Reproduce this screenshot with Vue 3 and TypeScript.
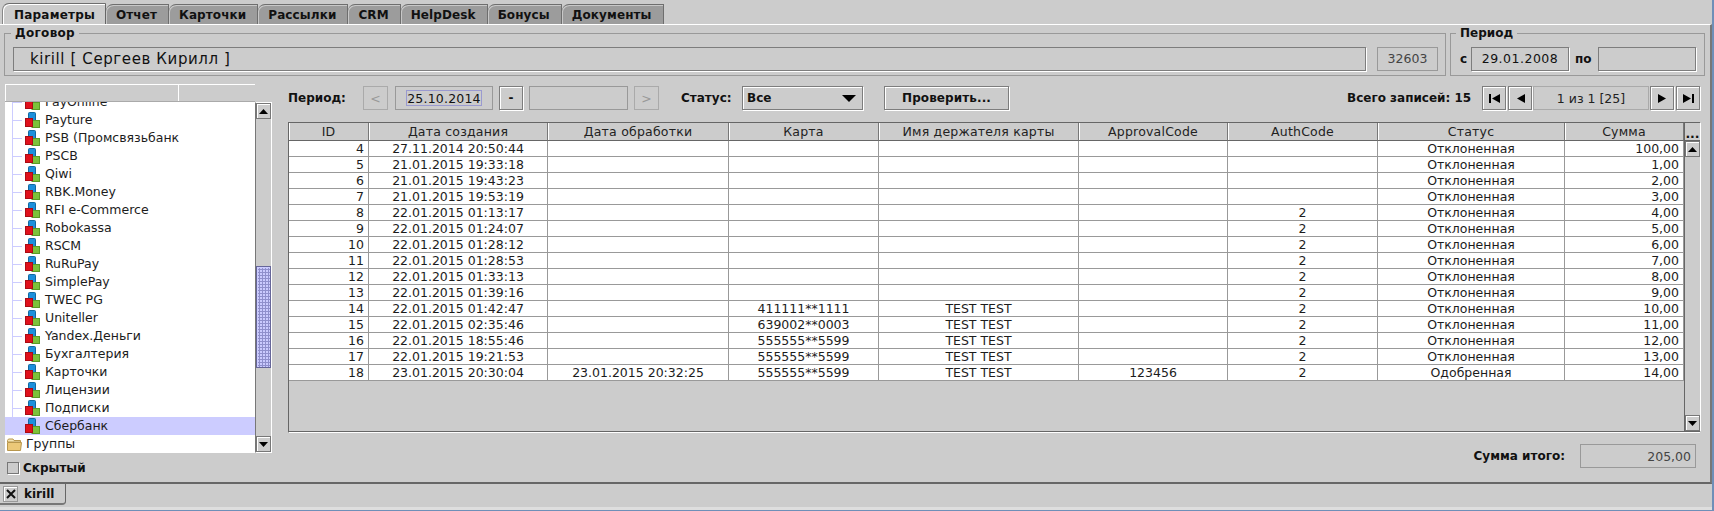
<script setup lang="ts">
interface Row {
  id: number; created: string; done: string; card: string; holder: string;
  approval: string; auth: string; status: string; sum: string;
}
const tabs = ['Параметры', 'Отчет', 'Карточки', 'Рассылки', 'CRM', 'HelpDesk', 'Бонусы', 'Документы'];
const tree = ['PayOnline', 'Payture', 'PSB (Промсвязьбанк', 'PSCB', 'Qiwi', 'RBK.Money', 'RFI e-Commerce', 'Robokassa', 'RSCM', 'RuRuPay', 'SimplePay', 'TWEC PG', 'Uniteller', 'Yandex.Деньги', 'Бухгалтерия', 'Карточки', 'Лицензии', 'Подписки', 'Сбербанк'];
const headers = ['ID', 'Дата создания', 'Дата обработки', 'Карта', 'Имя держателя карты', 'ApprovalCode', 'AuthCode', 'Статус', 'Сумма'];
const raw: [number, string, string, string, string, string, string, string, string][] = [
  [4, '27.11.2014 20:50:44', '', '', '', '', '', 'Отклоненная', '100,00'],
  [5, '21.01.2015 19:33:18', '', '', '', '', '', 'Отклоненная', '1,00'],
  [6, '21.01.2015 19:43:23', '', '', '', '', '', 'Отклоненная', '2,00'],
  [7, '21.01.2015 19:53:19', '', '', '', '', '', 'Отклоненная', '3,00'],
  [8, '22.01.2015 01:13:17', '', '', '', '', '2', 'Отклоненная', '4,00'],
  [9, '22.01.2015 01:24:07', '', '', '', '', '2', 'Отклоненная', '5,00'],
  [10, '22.01.2015 01:28:12', '', '', '', '', '2', 'Отклоненная', '6,00'],
  [11, '22.01.2015 01:28:53', '', '', '', '', '2', 'Отклоненная', '7,00'],
  [12, '22.01.2015 01:33:13', '', '', '', '', '2', 'Отклоненная', '8,00'],
  [13, '22.01.2015 01:39:16', '', '', '', '', '2', 'Отклоненная', '9,00'],
  [14, '22.01.2015 01:42:47', '', '411111**1111', 'TEST TEST', '', '2', 'Отклоненная', '10,00'],
  [15, '22.01.2015 02:35:46', '', '639002**0003', 'TEST TEST', '', '2', 'Отклоненная', '11,00'],
  [16, '22.01.2015 18:55:46', '', '555555**5599', 'TEST TEST', '', '2', 'Отклоненная', '12,00'],
  [17, '22.01.2015 19:21:53', '', '555555**5599', 'TEST TEST', '', '2', 'Отклоненная', '13,00'],
  [18, '23.01.2015 20:30:04', '23.01.2015 20:32:25', '555555**5599', 'TEST TEST', '123456', '2', 'Одобренная', '14,00'],
];
const rows: Row[] = raw.map(([id, created, done, card, holder, approval, auth, status, sum]) => ({ id, created, done, card, holder, approval, auth, status, sum }));
const colWidths = [80, 179, 181, 150, 200, 149, 150, 187, 119];
</script>

<template>
  <div class="app">
    <div class="tabs">
      <div v-for="(t, i) in tabs" :key="t" class="tab" :class="{ active: i === 0 }">{{ t }}</div>
    </div>

    <div class="panel">
      <div class="top-row">
        <fieldset class="group contract">
          <legend>Договор</legend>
          <div class="field name-field">kirill [ Сергеев Кирилл ]</div>
          <div class="field disabled num-field">32603</div>
        </fieldset>
        <fieldset class="group period">
          <legend>Период</legend>
          <span class="bold c-label">с</span>
          <div class="field date-field">29.01.2008</div>
          <span class="bold po-label">по</span>
          <div class="field date-field empty"></div>
        </fieldset>
      </div>

      <div class="content">
        <aside class="side">
          <div class="list-box">
            <div class="list-col">
              <div class="list-head"><div class="lh one"></div><div class="lh two"></div></div>
              <div class="list-body">
                <div v-for="(n, i) in tree" :key="n" class="tree-row" :class="{ selected: i === tree.length - 1 }">
                  <svg class="cube" width="15" height="16" viewBox="0 0 15 16">
                    <rect x="3.5" y="0.5" width="7" height="9" rx="1" fill="#1c8fdc" stroke="#13689f" />
                    <rect x="7" y="8.5" width="7.5" height="7" fill="#7cc23a" stroke="#5b9a26" />
                    <rect x="0.5" y="6.5" width="7" height="8" fill="#e0101c" stroke="#a80c14" />
                  </svg>
                  <span>{{ n }}</span>
                </div>
                <div class="tree-row group-row">
                  <svg class="folder" width="15" height="13" viewBox="0 0 15 13">
                    <path d="M0.5 2.5 L1.5 1 H6 L7 2.5 H13.5 V4 H0.5 Z" fill="#f4e4b4" stroke="#b8974e" />
                    <path d="M0.5 12.5 V4.5 H14.5 L13.5 12.5 Z" fill="#ecc878" stroke="#b8974e" />
                  </svg>
                  <span>Группы</span>
                </div>
              </div>
            </div>
            <div class="vscroll">
              <div class="sbtn"><svg width="9" height="5" viewBox="0 0 9 5"><path d="M4.5 0 L9 5 H0 Z" fill="#000" /></svg></div>
              <div class="thumb"></div>
              <div class="sbtn end"><svg width="9" height="5" viewBox="0 0 9 5"><path d="M0 0 H9 L4.5 5 Z" fill="#000" /></svg></div>
            </div>
          </div>
          <label class="check-row">
            <span class="check"></span>
            <span class="bold">Скрытый</span>
          </label>
        </aside>

        <main class="main">
          <div class="toolbar">
            <span class="bold lbl-period">Период:</span>
            <div class="btn disabled w25">&lt;</div>
            <div class="field disabled date-from"><span class="focus">25.10.2014</span></div>
            <div class="btn bold w24 ml6">-</div>
            <div class="field disabled date-to"></div>
            <div class="btn disabled w25 ml6">&gt;</div>
            <span class="bold lbl-status">Статус:</span>
            <div class="combo">
              <span class="bold">Все</span>
              <svg width="14" height="7" viewBox="0 0 14 7"><path d="M0 0 H14 L7 7 Z" fill="#000" /></svg>
            </div>
            <div class="btn bold check-btn">Проверить...</div>
            <span class="bold total">Всего записей: 15</span>
            <div class="btn w24">
              <svg width="11" height="9" viewBox="0 0 11 9"><path d="M0 0 H2 V9 H0 Z M11 0 V9 L3 4.5 Z" fill="#000" /></svg>
            </div>
            <div class="btn w24 ml2">
              <svg width="9" height="9" viewBox="0 0 9 9"><path d="M9 0 V9 L1 4.5 Z" fill="#000" /></svg>
            </div>
            <div class="field pager">1 из 1 [25]</div>
            <div class="btn w24">
              <svg width="9" height="9" viewBox="0 0 9 9"><path d="M0 0 V9 L8 4.5 Z" fill="#000" /></svg>
            </div>
            <div class="btn w24 ml2">
              <svg width="11" height="9" viewBox="0 0 11 9"><path d="M0 0 V9 L8 4.5 Z M9 0 H11 V9 H9 Z" fill="#000" /></svg>
            </div>
          </div>

          <div class="grid-box">
            <div class="grid-scroll">
              <table class="grid">
                <colgroup>
                  <col v-for="(w, i) in colWidths" :key="i" :style="{ width: w + 'px' }" />
                </colgroup>
                <thead>
                  <tr><th v-for="h in headers" :key="h">{{ h }}</th></tr>
                </thead>
                <tbody>
                  <tr v-for="r in rows" :key="r.id">
                    <td class="right">{{ r.id }}</td>
                    <td>{{ r.created }}</td>
                    <td>{{ r.done }}</td>
                    <td>{{ r.card }}</td>
                    <td>{{ r.holder }}</td>
                    <td>{{ r.approval }}</td>
                    <td>{{ r.auth }}</td>
                    <td>{{ r.status }}</td>
                    <td class="right">{{ r.sum }}</td>
                  </tr>
                </tbody>
              </table>
            </div>
            <div class="grid-side">
              <div class="corner">...</div>
              <div class="sbtn"><svg width="9" height="5" viewBox="0 0 9 5"><path d="M4.5 0 L9 5 H0 Z" fill="#000" /></svg></div>
              <div class="sbtn end"><svg width="9" height="5" viewBox="0 0 9 5"><path d="M0 0 H9 L4.5 5 Z" fill="#000" /></svg></div>
            </div>
          </div>

          <div class="sum-row">
            <span class="bold">Сумма итого:</span>
            <div class="field disabled sum-field">205,00</div>
          </div>
        </main>
      </div>
    </div>

    <div class="bottom">
      <div class="doc-tab">
        <div class="close">
          <svg width="10" height="10" viewBox="0 0 10 10"><path d="M1 1 L9 9 M9 1 L1 9" stroke="#111" stroke-width="2" /></svg>
        </div>
        <span class="bold">kirill</span>
      </div>
    </div>
    <div class="strip"></div>
  </div>
</template>

<style>
html, body { margin: 0; background: #cccccc; }
</style>

<style scoped>
.app {
  width: 1714px;
  height: 511px;
  display: flex;
  flex-direction: column;
  box-sizing: border-box;
  overflow: hidden;
  background: #cccccc;
  border-right: 2px solid #6f8fb8;
  font-family: "DejaVu Sans", sans-serif;
  font-size: 12.5px;
  color: #111;
}
.bold { font-weight: 700; font-size: 12px; }

/* top tabs */
.tabs {
  height: 24px;
  flex: none;
  display: flex;
  align-items: flex-end;
  padding-left: 2px;
  box-sizing: border-box;
}
.tab {
  height: 20px;
  line-height: 19px;
  box-sizing: border-box;
  padding: 1px 11px 0 10px;
  background: #9c9c9c;
  border: 1px solid #6e6e6e;
  border-left: none;
  border-bottom: none;
  border-top-left-radius: 7px;
  box-shadow: inset 1px 1px 0 #c8c8c8;
  font-weight: 700;
  font-size: 12px;
  letter-spacing: 0.1px;
  white-space: nowrap;
}
.tab.active {
  height: 21px;
  line-height: 21px;
  padding: 1px 10px 0 11px;
  background: #cccccc;
  box-shadow: inset 1px 1px 0 #fff;
  border-left: 1px solid #888;
  border-right: 1px solid #666;
  letter-spacing: 0.2px;
}

/* main panel */
.panel {
  height: 460px;
  flex: none;
  box-sizing: border-box;
  border-top: 1px solid #fff;
  border-right: 2px solid #777;
  border-bottom: 2px solid #666;
  padding: 1px 3px 0 4px;
}
.top-row { display: flex; gap: 4px; height: 50px; }
.group {
  margin: 0;
  padding: 2px 0 0;
  box-sizing: border-box;
  border: 1px solid #999;
  min-width: 0;
  display: flex;
  align-items: center;
  height: 50px;
}
.group legend {
  font-weight: 700;
  font-size: 12px;
  padding: 0 4px;
  margin-left: 5px;
  line-height: 14px;
}
.contract { width: 1442px; padding-left: 8px; }
.contract legend { margin-left: -2px; letter-spacing: 0.3px; }
.period { width: 255px; }
.field {
  height: 24px;
  box-sizing: border-box;
  border: 1px solid #7d7d7d;
  box-shadow: 1px 1px 0 #fff;
  display: flex;
  align-items: center;
  flex: none;
}
.field.disabled { border-color: #999; box-shadow: none; color: #444; }
.name-field { width: 1353px; padding-left: 16px; font-size: 15px; letter-spacing: 0.6px; }
.num-field { width: 61px; margin-left: 11px; justify-content: center; }
.c-label { margin-left: 9px; width: 11px; }
.po-label { margin-left: 6px; width: 23px; }
.date-field { width: 98px; justify-content: center; font-weight: 500; letter-spacing: 0.5px; }

/* content */
.content { display: flex; margin-top: 8px; height: 400px; }
.side { width: 267px; flex: none; margin-left: 1px; }
.list-box { display: flex; height: 369px; }
.list-col { width: 250px; flex: none; display: flex; flex-direction: column; }
.list-head { height: 18px; display: flex; flex: none; }
.lh { height: 18px; box-sizing: border-box; background: #ccc; box-shadow: inset 1px 1px 0 #fff; border-bottom: 1px solid #aaa; }
.lh.one { width: 173px; }
.lh.two { width: 77px; }
.list-body {
  height: 351px;
  flex: none;
  background: #fff;
  overflow: hidden;
  display: flex;
  flex-direction: column;
  justify-content: flex-end;
  box-sizing: border-box;
}
.tree-row {
  height: 18px;
  flex: none;
  display: flex;
  align-items: center;
  padding-left: 20px;
  gap: 5px;
  line-height: 18px;
  color: #1c1c1c;
  background-image:
    linear-gradient(#ccccff, #ccccff),
    linear-gradient(#ccccff, #ccccff);
  background-size: 1px 100%, 10px 1px;
  background-position: 7px 0, 7px 9px;
  background-repeat: no-repeat;
}
.tree-row.selected { background: #ccccff; }
.group-row { padding-left: 2px; gap: 4px; background-image: none; }
.vscroll {
  width: 17px;
  flex: none;
  height: 351px;
  margin-top: 18px;
  box-sizing: border-box;
  border: 1px solid #fff;
  border-left-color: #777;
  background: #ccc;
  display: flex;
  flex-direction: column;
}
.sbtn {
  height: 16px;
  flex: none;
  box-sizing: border-box;
  border: 1px solid #777;
  box-shadow: inset 1px 1px 0 #fff;
  display: flex;
  align-items: center;
  justify-content: center;
  background: #ccc;
}
.sbtn.end { margin-top: auto; }
.thumb {
  height: 102px;
  margin-top: 147px;
  box-sizing: border-box;
  border: 1px solid #666699;
  box-shadow: inset 1px 1px 0 #ccccff;
  background-color: #8f8fcc;
  background-image: radial-gradient(circle at 1px 1px, #ccccff 0.7px, transparent 1px);
  background-size: 3px 3px;
}
.check-row { display: flex; align-items: center; gap: 4px; margin-left: 2px; height: 14px; margin-top: 8px; }
.check {
  width: 12px;
  height: 12px;
  box-sizing: border-box;
  border: 1px solid #777;
  box-shadow: 1px 1px 0 #fff;
  display: block;
}

/* right area */
.main { width: 1412px; margin-left: 16px; flex: none; padding-top: 2px; }
.toolbar { display: flex; align-items: center; height: 24px; }
.btn {
  height: 24px;
  box-sizing: border-box;
  border: 1px solid #7d7d7d;
  box-shadow: inset 1px 1px 0 #fff, 1px 1px 0 #fff;
  display: flex;
  align-items: center;
  justify-content: center;
  flex: none;
}
.btn.disabled { border-color: #aaa; color: #999; box-shadow: none; }
.w25 { width: 25px; }
.w24 { width: 24px; }
.ml6 { margin-left: 6px; }
.ml2 { margin-left: 2px; }
.lbl-period { width: 75px; flex: none; }
.date-from { width: 98px; margin-left: 7px; justify-content: center; }
.focus { width: 76px; height: 16px; box-sizing: border-box; border: 1px solid #9a9ad0; display: flex; align-items: center; justify-content: center; color: #111; letter-spacing: 0.2px; }
.date-to { width: 99px; margin-left: 6px; }
.lbl-status { margin-left: 22px; width: 61px; flex: none; }
.combo {
  width: 121px;
  height: 24px;
  box-sizing: border-box;
  border: 1px solid #7d7d7d;
  box-shadow: inset 1px 1px 0 #fff, 1px 1px 0 #fff;
  display: flex;
  align-items: center;
  justify-content: space-between;
  padding: 0 6px 0 4px;
  flex: none;
}
.check-btn { width: 125px; margin-left: 21px; letter-spacing: 0.1px; }
.total { margin-left: auto; width: 135px; flex: none; }
.pager { width: 116px; margin: 0 1px; justify-content: center; border-color: #aaa; box-shadow: none; color: #222; }

.grid-box {
  margin-top: 12px;
  height: 311px;
  box-sizing: border-box;
  display: flex;
  border-top: 1px solid #666;
  border-left: 1px solid #666;
  border-bottom: 1px solid #fff;
  box-shadow: inset 0 -1px 0 #666;
}
.grid-scroll { width: 1395px; flex: none; overflow: hidden; }
.grid {
  table-layout: fixed;
  width: 1395px;
  border-collapse: separate;
  border-spacing: 0;
}
.grid th {
  height: 18px;
  padding: 0;
  box-sizing: border-box;
  font-weight: 400;
  font-size: 12.5px;
  color: #222;
  letter-spacing: 0.2px;
  background: #ccc;
  border-right: 1px solid #777;
  border-bottom: 1px solid #666;
  box-shadow: inset 1px 0 0 #fff;
  line-height: 16px;
}
.grid td {
  height: 16px;
  padding: 0 4px;
  box-sizing: border-box;
  background: #fff;
  border-right: 1px solid #999;
  border-bottom: 1px solid #999;
  text-align: center;
  line-height: 15px;
  white-space: nowrap;
  color: #1c1c1c;
  overflow: hidden;
}
.grid td.right { text-align: right; }
.grid-side {
  width: 17px;
  flex: none;
  display: flex;
  flex-direction: column;
  box-sizing: border-box;
  border-right: 1px solid #fff;
  border-left: 1px solid #666;
  margin-bottom: 1px;
}
.corner {
  height: 18px;
  flex: none;
  box-sizing: border-box;
  padding-top: 5px;
  font-weight: 700;
  line-height: 12px;
  text-align: center;
  border-bottom: 1px solid #666;
  letter-spacing: 0;
}
.sum-row {
  margin-top: 11px;
  height: 24px;
  display: flex;
  align-items: center;
  justify-content: flex-end;
  padding-right: 4px;
  gap: 15px;
}
.sum-field { width: 116px; justify-content: flex-end; padding-right: 4px; }

/* bottom document bar */
.bottom { height: 23px; flex: none; }
.doc-tab {
  width: 66px;
  height: 21px;
  box-sizing: border-box;
  border-right: 1px solid #666;
  border-bottom: 2px solid #777;
  border-bottom-right-radius: 4px;
  display: flex;
  align-items: center;
  padding-left: 3px;
  gap: 6px;
}
.close {
  width: 15px;
  height: 16px;
  box-sizing: border-box;
  border: 1px solid #999;
  box-shadow: inset 1px 1px 0 #fff;
  display: flex;
  align-items: center;
  justify-content: center;
}
.strip { flex: 1; background: #dedede; border-bottom: 1px solid #6f8fb8; }
</style>
